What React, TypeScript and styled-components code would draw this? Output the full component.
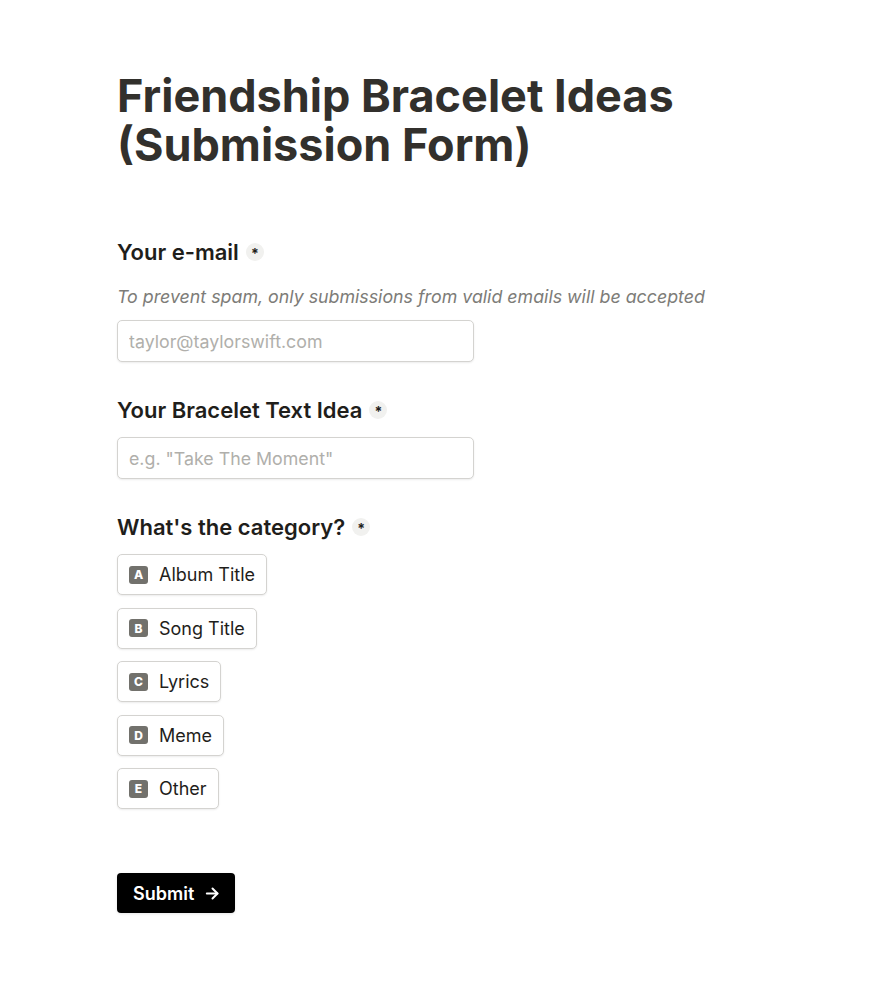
import React from "react";
import styled, { createGlobalStyle } from "styled-components";

const Global = createGlobalStyle`
  html, body { margin: 0; padding: 0; background: #fff; }
  body { font-family: Inter, "Noto Sans", sans-serif; color: #37352f; -webkit-font-smoothing: antialiased; }
  * { box-sizing: border-box; }
`;

const Page = styled.main`
  padding: 71px 0 80px 117px;
  width: 892px;
`;

const Title = styled.h1`
  margin: 0 0 68px;
  font-size: 45px;
  line-height: 49px;
  font-weight: 700;
  color: #32302c;
  width: 680px;
`;

const Field = styled.section`
  display: flex;
  flex-direction: column;
  align-items: flex-start;
  margin-bottom: 33px;
`;

const Label = styled.h2`
  margin: 0 0 12px;
  font-size: 22px;
  line-height: 30px;
  font-weight: 600;
  color: #1f1e1b;
  display: flex;
  align-items: center;
  gap: 7px;
`;

const Req = styled.span`
  width: 18px;
  height: 18px;
  border-radius: 50%;
  background: #f1f1ef;
  display: inline-flex;
  align-items: center;
  justify-content: center;
  font-size: 14px;
  font-weight: 700;
  color: #1f1e1b;
  line-height: 1;
  padding-top: 4px;
`;

const Help = styled.p`
  margin: 6px 0 11px;
  font-size: 17.8px;
  line-height: 24px;
  font-style: italic;
  color: #7d7c78;
`;

const Input = styled.input`
  width: 357px;
  height: 42px;
  border: 1px solid #d4d3d0;
  border-radius: 5px;
  padding: 0 11px;
  font-family: Inter, sans-serif;
  font-size: 17.8px;
  color: #37352f;
  box-shadow: 0 1px 2px rgba(0,0,0,0.08);
  outline: none;
  &::placeholder { color: #b0afab; }
`;

const Choices = styled.div`
  display: flex;
  flex-direction: column;
  align-items: flex-start;
  gap: 12.5px;
`;

const Choice = styled.button`
  display: inline-flex;
  align-items: center;
  gap: 11px;
  height: 41px;
  padding: 0 11px 0 11px;
  border: 1px solid #d4d3d0;
  border-radius: 5px;
  background: #fff;
  font-family: Inter, sans-serif;
  font-size: 18px;
  color: #1f1e1b;
  box-shadow: 0 1px 2px rgba(0,0,0,0.08);
  cursor: pointer;
`;

const Key = styled.span`
  width: 19px;
  height: 18px;
  border-radius: 3px;
  background: #72716c;
  color: #fff;
  font-size: 12px;
  font-weight: 800;
  display: inline-flex;
  align-items: center;
  justify-content: center;
`;

const Submit = styled.button`
  margin-top: 31px;
  display: inline-flex;
  align-items: center;
  gap: 10px;
  height: 40px;
  padding: 0 14px 0 16px;
  border: none;
  border-radius: 4px;
  background: #000;
  color: #fff;
  font-family: Inter, sans-serif;
  font-size: 18px;
  font-weight: 600;
  box-shadow: 0 1px 3px rgba(0,0,0,0.1);
`;

const options = [
  ["A", "Album Title"],
  ["B", "Song Title"],
  ["C", "Lyrics"],
  ["D", "Meme"],
  ["E", "Other"],
];

export default function App() {
  return (
    <Page>
      <Global />
      <Title>Friendship Bracelet Ideas (Submission Form)</Title>
      <Field>
        <Label>Your e-mail <Req>*</Req></Label>
        <Help>To prevent spam, only submissions from valid emails will be accepted</Help>
        <Input placeholder="taylor@taylorswift.com" />
      </Field>
      <Field>
        <Label>Your Bracelet Text Idea <Req>*</Req></Label>
        <Input placeholder={'e.g. "Take The Moment"'} />
      </Field>
      <Field>
        <Label>What's the category? <Req>*</Req></Label>
        <Choices>
          {options.map(([k, t]) => (
            <Choice key={k} type="button">
              <Key>{k}</Key>
              {t}
            </Choice>
          ))}
        </Choices>
      </Field>
      <Submit type="button">
        Submit
        <svg width="17" height="17" viewBox="0 0 24 24" fill="none" stroke="#fff" strokeWidth="2.8" strokeLinecap="round" strokeLinejoin="round">
          <path d="M4 12h15" />
          <path d="M12 5l7 7-7 7" />
        </svg>
      </Submit>
    </Page>
  );
}
